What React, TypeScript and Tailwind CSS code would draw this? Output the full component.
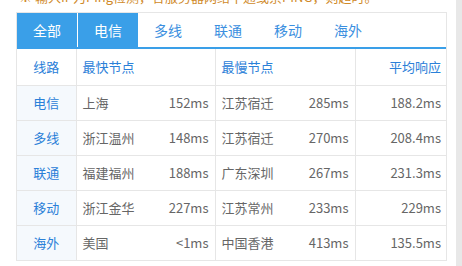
import { useState } from "react";

const tabs = ["全部", "电信", "多线", "联通", "移动", "海外"];

const rows = [
  { line: "电信", fast: "上海", fastMs: "152ms", slow: "江苏宿迁", slowMs: "285ms", avg: "188.2ms" },
  { line: "多线", fast: "浙江温州", fastMs: "148ms", slow: "江苏宿迁", slowMs: "270ms", avg: "208.4ms" },
  { line: "联通", fast: "福建福州", fastMs: "188ms", slow: "广东深圳", slowMs: "267ms", avg: "231.3ms" },
  { line: "移动", fast: "浙江金华", fastMs: "227ms", slow: "江苏常州", slowMs: "233ms", avg: "229ms" },
  { line: "海外", fast: "美国", fastMs: "<1ms", slow: "中国香港", slowMs: "413ms", avg: "135.5ms" },
];

export default function App() {
  const [active, setActive] = useState(1);

  return (
    <div
      className="flex w-[462px] h-[266px] overflow-hidden bg-white text-[13px] text-[#666]"
      style={{ fontFamily: '"Microsoft YaHei", "Noto Sans CJK SC", sans-serif' }}
    >
      <div className="flex-1 pl-4 pr-[9px]">
        {/* note line, scrolled mostly out of view */}
        <div className="h-3 overflow-hidden">
          <div className="mt-[-13px] pl-[3px] leading-[20px] text-[13px] text-[#d08a2a] whitespace-nowrap">
            ※ 输入IP为Ping检测，各服务器网络不通或禁PING，则超时。
          </div>
        </div>

        <div className="border border-[#e6e6e6]">
          {/* tabs */}
          <div className="flex h-9 border-b-2 border-[#3a9fe8]">
            {tabs.map((t, i) => {
              const blue = i === 0 || i === active;
              return (
                <button
                  key={t}
                  onClick={() => i > 0 && setActive(i)}
                  className={
                    "w-[60px] h-full text-[14px] " +
                    (blue ? "bg-[#3a9fe8] text-white " : "text-[#3b8fe0] ") +
                    (i === 0 ? "border-r border-white w-[61px]" : "")
                  }
                >
                  {t}
                </button>
              );
            })}
          </div>

          {/* table */}
          <table className="w-full table-fixed border-collapse">
            <colgroup>
              <col className="w-[59px]" />
              <col className="w-[139px]" />
              <col className="w-[140px]" />
              <col />
            </colgroup>
            <thead>
              <tr className="h-[36px] text-[#2b80d8]">
                <th className="font-normal text-center border-r border-b border-[#e6e6e6]">线路</th>
                <th className="font-normal text-left px-[6px] border-r border-b border-[#e6e6e6]">最快节点</th>
                <th className="font-normal text-left px-[6px] border-r border-b border-[#e6e6e6]">最慢节点</th>
                <th className="font-normal text-right px-[5px] border-b border-[#e6e6e6]">平均响应</th>
              </tr>
            </thead>
            <tbody>
              {rows.map((r, i) => (
                <tr key={r.line} className="h-[35px]">
                  <td
                    className={
                      "text-center bg-[#f5f9fd] text-[#2b80d8] border-r border-[#e6e6e6] " +
                      (i < rows.length - 1 ? "border-b" : "")
                    }
                  >
                    {r.line}
                  </td>
                  <td className={"px-[6px] border-r border-[#e6e6e6] " + (i < rows.length - 1 ? "border-b" : "")}>
                    <div className="flex justify-between">
                      <span>{r.fast}</span>
                      <span>{r.fastMs}</span>
                    </div>
                  </td>
                  <td className={"px-[6px] border-r border-[#e6e6e6] " + (i < rows.length - 1 ? "border-b" : "")}>
                    <div className="flex justify-between">
                      <span>{r.slow}</span>
                      <span>{r.slowMs}</span>
                    </div>
                  </td>
                  <td className={"px-[5px] text-right border-[#e6e6e6] " + (i < rows.length - 1 ? "border-b" : "")}>
                    {r.avg}
                  </td>
                </tr>
              ))}
            </tbody>
          </table>
        </div>
      </div>

      {/* scrollbar strip */}
      <div className="w-[6px] h-full bg-[#e8e8e8]" />
    </div>
  );
}
